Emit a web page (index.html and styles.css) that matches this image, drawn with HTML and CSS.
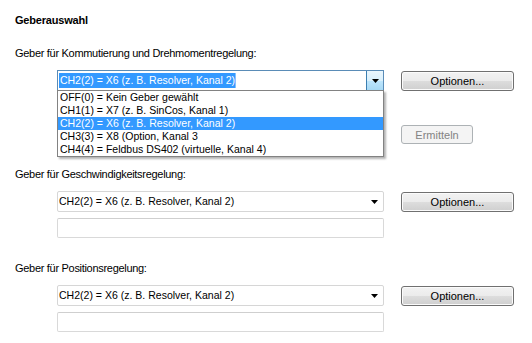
FILE: index.html
```html
<!DOCTYPE html>
<html lang="de">
<head>
    <meta charset="UTF-8">
    <title>Geberauswahl</title>
    <link rel="stylesheet" href="styles.css">
</head>
<body>
<div class="dialog">
    <h1 class="title">Geberauswahl</h1>

    <!-- Kommutierung, Liste ist aufgeklappt -->
    <section class="group">
        <div class="caption">Geber für Kommutierung und Drehmomentregelung:</div>
        <div class="fields">
            <div class="combo focused">
                <span class="value"><span class="txt selected">CH2(2) = X6 (z. B. Resolver, Kanal 2)</span></span>
                <span class="drop hot">
                    <svg width="7" height="4" viewBox="0 0 7 4"><path d="M0 0h7L3.5 4z" fill="#000"/></svg>
                </span>
                <ul class="list">
                    <li><span class="txt">OFF(0) = Kein Geber gewählt</span></li>
                    <li><span class="txt">CH1(1) = X7 (z. B. SinCos, Kanal 1)</span></li>
                    <li class="active"><span class="txt">CH2(2) = X6 (z. B. Resolver, Kanal 2)</span></li>
                    <li><span class="txt">CH3(3) = X8 (Option, Kanal 3</span></li>
                    <li><span class="txt">CH4(4) = Feldbus DS402 (virtuelle, Kanal 4)</span></li>
                </ul>
            </div>
            <button class="btn">Optionen...</button>
            <div class="textbox"></div>
            <div></div>
            <div></div>
            <button class="btn disabled" disabled>Ermitteln</button>
        </div>
    </section>

    <section class="group">
        <div class="caption">Geber für Geschwindigkeitsregelung:</div>
        <div class="fields">
            <div class="combo">
                <span class="value"><span class="txt">CH2(2) = X6 (z. B. Resolver, Kanal 2)</span></span>
                <span class="drop">
                    <svg width="7" height="4" viewBox="0 0 7 4"><path d="M0 0h7L3.5 4z" fill="#000"/></svg>
                </span>
            </div>
            <button class="btn">Optionen...</button>
            <div class="textbox"></div>
        </div>
    </section>

    <section class="group">
        <div class="caption">Geber für Positionsregelung:</div>
        <div class="fields">
            <div class="combo">
                <span class="value"><span class="txt">CH2(2) = X6 (z. B. Resolver, Kanal 2)</span></span>
                <span class="drop">
                    <svg width="7" height="4" viewBox="0 0 7 4"><path d="M0 0h7L3.5 4z" fill="#000"/></svg>
                </span>
            </div>
            <button class="btn">Optionen...</button>
            <div class="textbox"></div>
        </div>
    </section>
</div>
</body>
</html>
```

FILE: styles.css
```css
body {
    margin: 0;
    background-color: #fff;
    color: #000;
    font-family: "Liberation Sans", Arial, sans-serif;
    font-size: 11px;
}
.dialog {
    padding: 14px 0 0 15px;
}
.title {
    margin: 0 0 20px;
    font-size: 11px;
    font-weight: bold;
    line-height: 13px;
    letter-spacing: -0.2px;
}
.group {
    margin-bottom: 24px;
}
.group:last-child {
    margin-bottom: 0;
}
.caption {
    line-height: 13px;
    margin-bottom: 10px;
    letter-spacing: -0.3px;
}
.fields {
    display: grid;
    grid-template-columns: 327px 113px;
    column-gap: 17px;
    row-gap: 6px;
    margin-left: 42px;
}
.combo {
    position: relative;
    display: flex;
    align-items: center;
    height: 21px;
    box-sizing: border-box;
    border: 1px solid #d6d6d6;
    border-radius: 2px;
    font-size: 11.5px;
}
.txt {
    display: inline-block;
    transform: scaleX(0.915);
    transform-origin: left center;
    white-space: nowrap;
}
.combo .value {
    flex: 1;
    padding-left: 1px;
    line-height: 15px;
    white-space: nowrap;
}
.combo .selected {
    background-color: #3399ff;
    color: #fff;
    padding: 0 1px;
}
.drop {
    display: flex;
    align-items: center;
    justify-content: center;
    width: 17px;
    height: 100%;
}
.drop svg {
    display: block;
}
.focused {
    border-color: #5a8cb7;
    border-radius: 0;
}
.drop.hot {
    box-sizing: border-box;
    border-left: 1px solid #3c7fb1;
    background: linear-gradient(#eaf6fd, #d9f0fc 50%, #bee6fd 50%, #a7d9f5);
}
.list {
    position: absolute;
    top: 100%;
    left: -1px;
    right: -1px;
    margin: 0;
    padding: 0;
    list-style: none;
    background-color: #fff;
    border: 1px solid #828282;
    box-shadow: 2px 2px 2px rgba(0, 0, 0, 0.3);
    z-index: 2;
}
.list li {
    height: 13px;
    line-height: 13px;
    padding-left: 2px;
    white-space: nowrap;
}
.list li.active {
    background-color: #3399ff;
    color: #fff;
}
.textbox {
    height: 20px;
    box-sizing: border-box;
    border: 1px solid #d9d9d9;
    border-top-color: #cfcfcf;
    border-radius: 2px;
}
.btn {
    align-self: center;
    height: 20px;
    padding: 0;
    border: 1px solid #707070;
    border-radius: 3px;
    background: linear-gradient(#f2f2f2, #ebebeb 50%, #dddddd 50%, #cfcfcf);
    box-shadow: inset 0 0 0 1px #fbfbfb;
    font-family: "Liberation Sans", Arial, sans-serif;
    font-size: 11px;
    color: #000;
}
.btn.disabled {
    justify-self: start;
    width: 72px;
    height: 19px;
    margin-top: 2px;
    border-color: #adb2b5;
    background: #f4f4f4;
    box-shadow: none;
    color: #838383;
}
```
